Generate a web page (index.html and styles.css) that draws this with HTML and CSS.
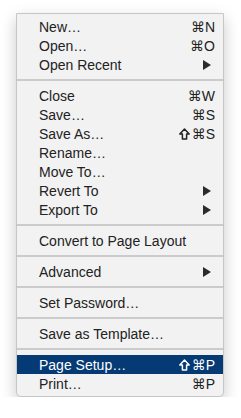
FILE: index.html
```html
<!DOCTYPE html>
<html lang="en">

<head>
    <meta charset="UTF-8">
    <meta name="viewport" content="width=device-width, initial-scale=1.0">
    <title>File Menu</title>
    <link rel="stylesheet" href="styles.css">
</head>

<body>
    <div class="menu">
        <div class="menu-item"><span class="label">New…</span><span class="shortcut">⌘N</span></div>
        <div class="menu-item"><span class="label">Open…</span><span class="shortcut">⌘O</span></div>
        <div class="menu-item"><span class="label">Open Recent</span><span class="submenu"></span></div>
        <div class="separator"></div>
        <div class="menu-item"><span class="label">Close</span><span class="shortcut">⌘W</span></div>
        <div class="menu-item"><span class="label">Save…</span><span class="shortcut">⌘S</span></div>
        <div class="menu-item"><span class="label">Save As…</span><span class="shortcut"><svg class="shift" viewBox="0 0 11 12"><path d="M5.5 1 L10.2 6 L7.6 6 L7.6 11 L3.4 11 L3.4 6 L0.8 6 Z" /></svg>⌘S</span></div>
        <div class="menu-item"><span class="label">Rename…</span></div>
        <div class="menu-item"><span class="label">Move To…</span></div>
        <div class="menu-item"><span class="label">Revert To</span><span class="submenu"></span></div>
        <div class="menu-item"><span class="label">Export To</span><span class="submenu"></span></div>
        <div class="separator"></div>
        <div class="menu-item"><span class="label">Convert to Page Layout</span></div>
        <div class="separator"></div>
        <div class="menu-item"><span class="label">Advanced</span><span class="submenu"></span></div>
        <div class="separator"></div>
        <div class="menu-item"><span class="label">Set Password…</span></div>
        <div class="separator"></div>
        <div class="menu-item"><span class="label">Save as Template…</span></div>
        <div class="separator"></div>
        <div class="menu-item active"><span class="label">Page Setup…</span><span class="shortcut"><svg class="shift" viewBox="0 0 11 12"><path d="M5.5 1 L10.2 6 L7.6 6 L7.6 11 L3.4 11 L3.4 6 L0.8 6 Z" /></svg>⌘P</span></div>
        <div class="menu-item"><span class="label">Print…</span><span class="shortcut">⌘P</span></div>
    </div>
</body>

</html>
```

FILE: styles.css
```css
body {
    margin: 0;
    background-color: #ffffff;
    font-family: "Liberation Sans", Arial, "DejaVu Sans", sans-serif;
}

.menu {
    margin: 13px 0 0 16px;
    width: 206px;
    padding: 3px 0;
    background-color: #f2f2f2;
    border: 1px solid #c6c6c6;
    border-radius: 0 0 5px 5px;
    box-shadow: 0 6px 16px rgba(0, 0, 0, 0.22);
}

.menu-item {
    display: flex;
    align-items: center;
    height: 19px;
    padding: 0 8px 0 22px;
    font-size: 14px;
    color: #222222;
}

.menu-item .label {
    flex: 1;
}

.menu-item.active {
    background-color: #053a75;
    color: #ffffff;
}

.shortcut {
    display: flex;
    align-items: center;
    font-family: "Liberation Sans", "DejaVu Sans", sans-serif;
    font-size: 14px;
}

.shift {
    width: 11px;
    height: 12px;
    margin-right: 2px;
    fill: none;
    stroke: currentColor;
    stroke-width: 1.5;
    stroke-linejoin: round;
}

.submenu {
    width: 0;
    height: 0;
    margin-right: 4px;
    border-top: 5px solid transparent;
    border-bottom: 5px solid transparent;
    border-left: 8px solid #2b2b2b;
}

.separator {
    height: 2px;
    margin: 5px 0;
    background-color: #cbcbcb;
}
```
